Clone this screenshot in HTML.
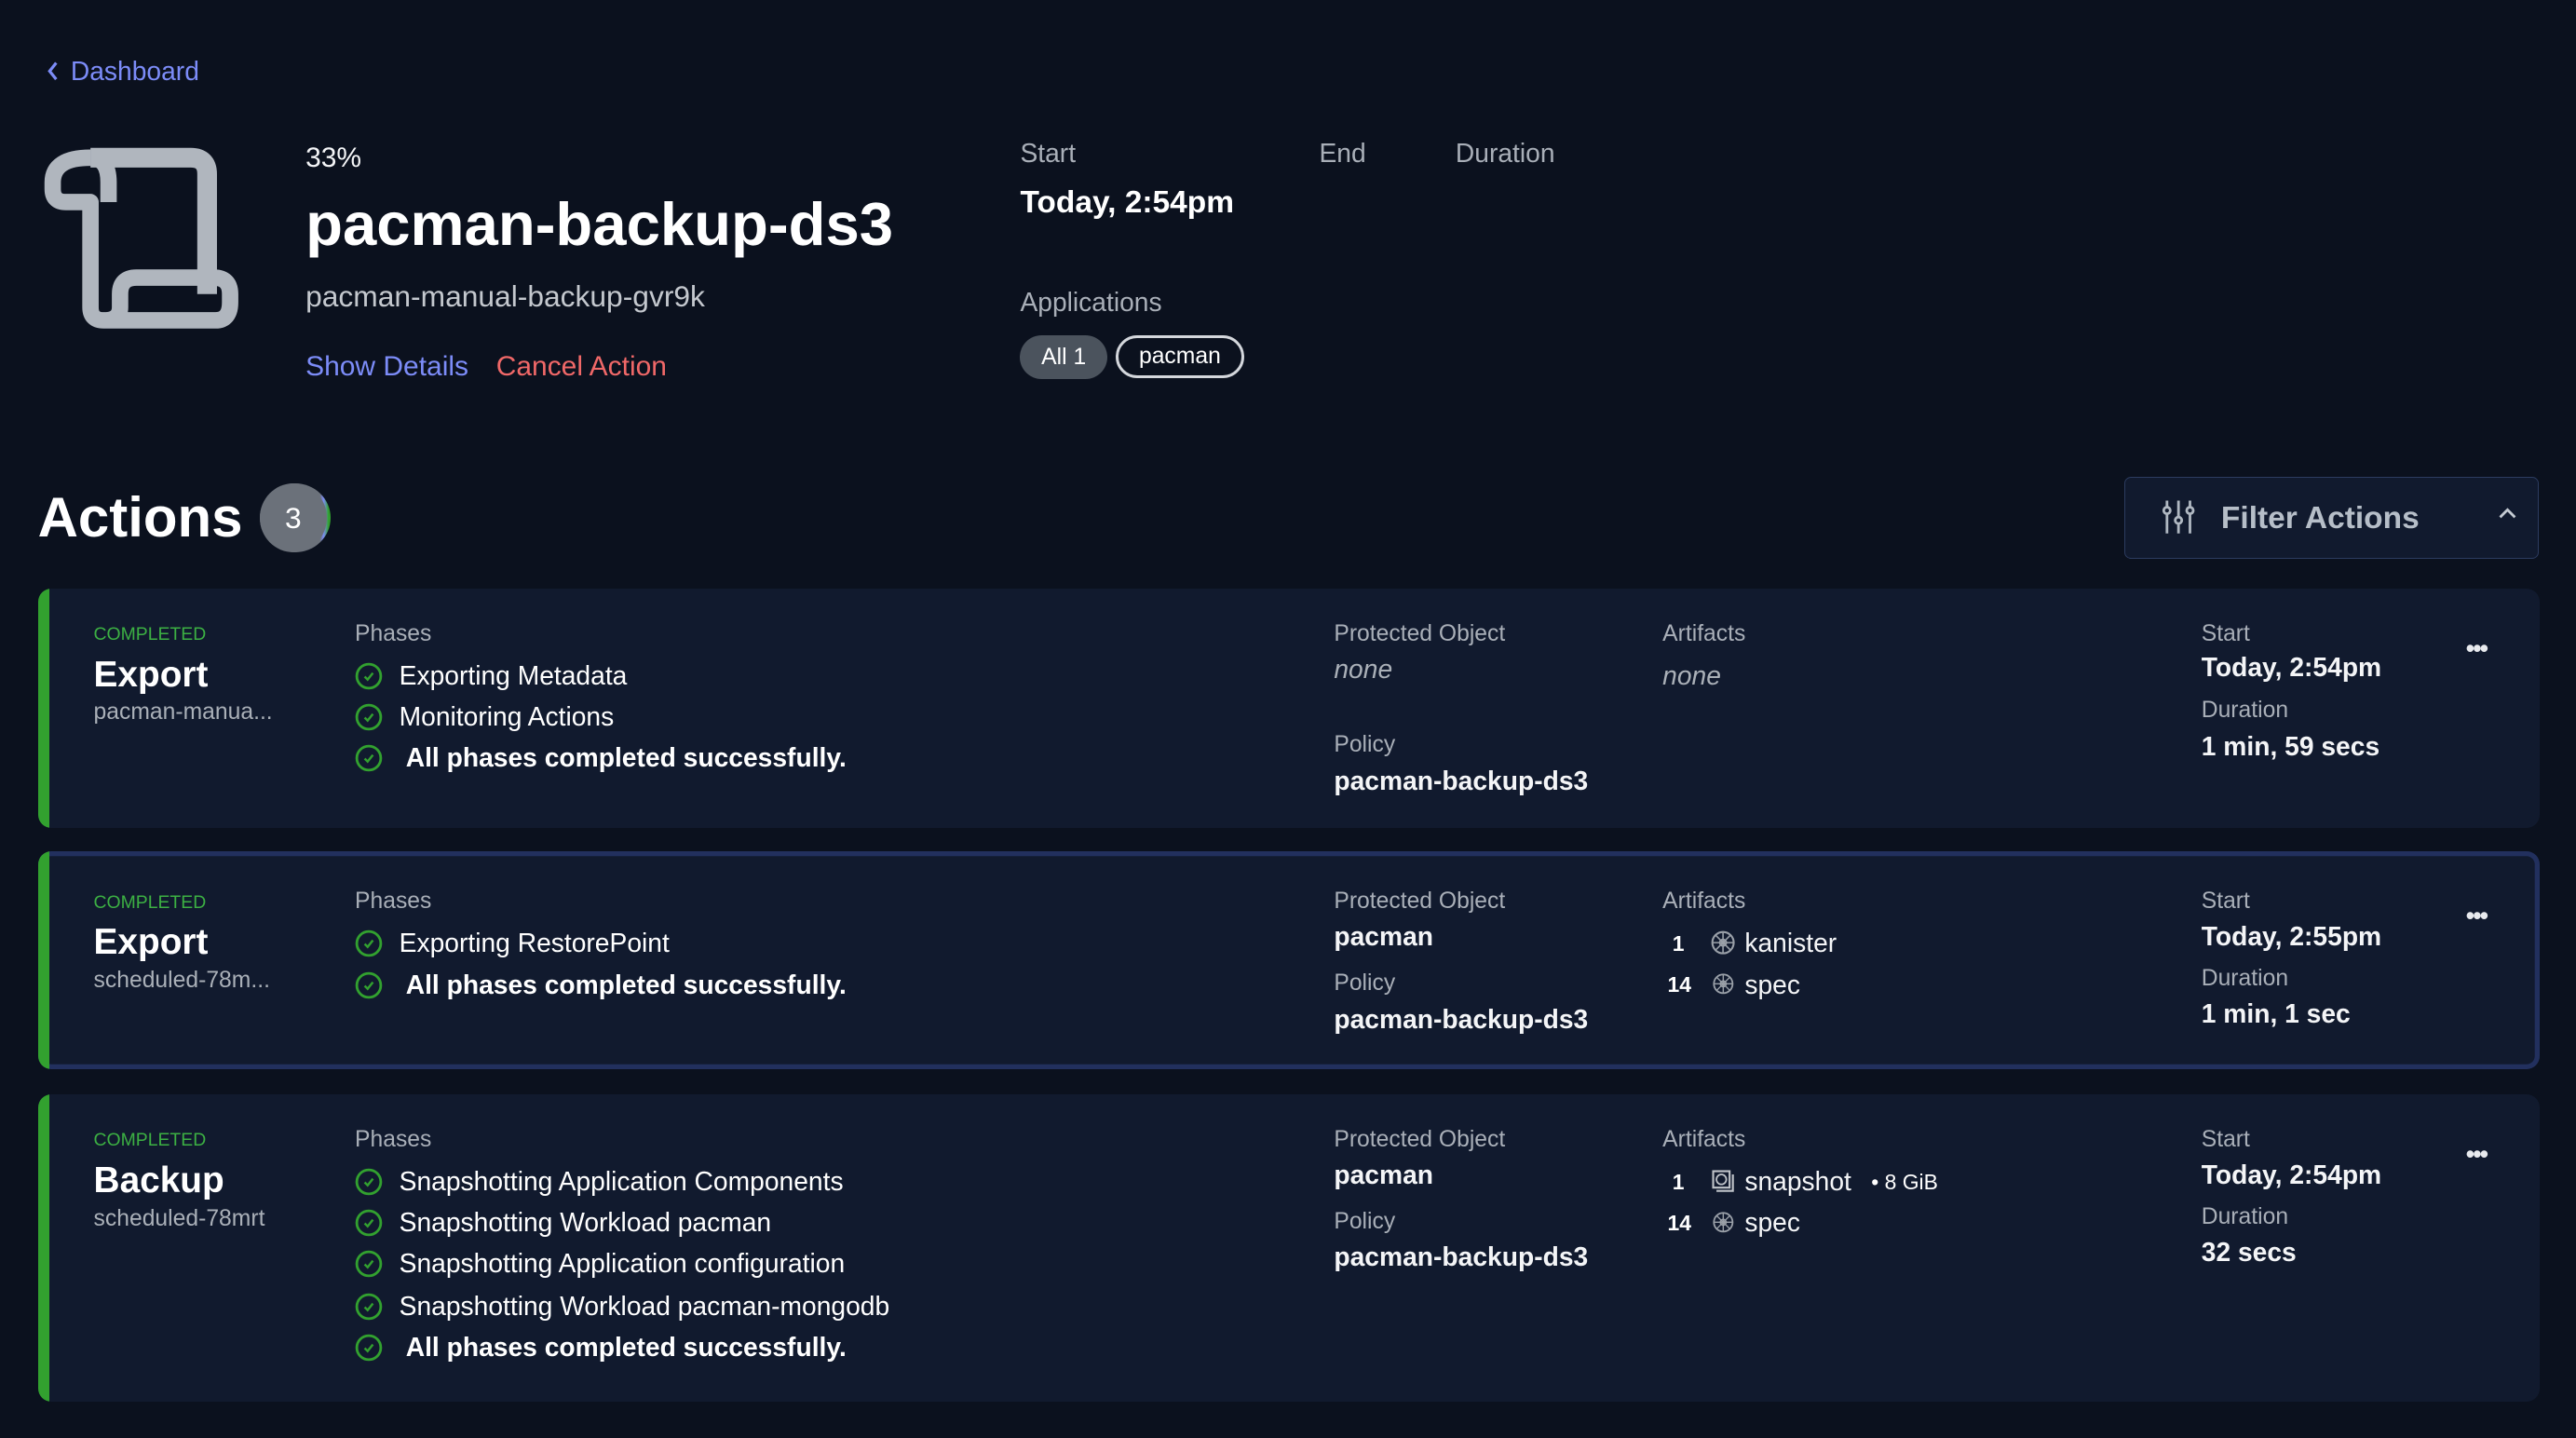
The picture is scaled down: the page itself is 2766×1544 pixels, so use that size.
<!DOCTYPE html>
<html><head><meta charset="utf-8"><style>
html,body{margin:0;padding:0;background:#0b111e;width:2766px;height:1544px;overflow:hidden}
#w{zoom:1.764;position:relative;width:1568px;height:875px;font-family:"Liberation Sans",sans-serif;color:#fff}
.t{position:absolute;white-space:nowrap;line-height:1}
div.t{margin-top:1px}
.lab{color:#a9afb8;font-size:14px}
.val{font-size:16px;font-weight:bold;color:#f4f5f7}
.card{position:absolute;left:23px;width:1523px;background:#111a2e;border-radius:8px;overflow:hidden}
.card .bar{position:absolute;left:0;top:0;bottom:0;width:7px;background:#32a12f}
.ck{position:absolute;width:17px;height:17px}
.dots{position:absolute;font-size:15px;font-weight:bold;letter-spacing:-1px;color:#e8eaee}
</style></head><body><div id="w">

<svg class="t" style="left:27px;top:36px" width="10" height="14" viewBox="0 0 10 14"><path d="M7 2 L3 7 L7 12" fill="none" stroke="#7c8cf8" stroke-width="1.8"/></svg>
<div class="t" style="left:43px;top:34px;font-size:16px;color:#7c8cf8">Dashboard</div>

<svg class="t" style="left:26px;top:89px" width="122" height="112" viewBox="0 0 122 112">
<path d="M29 7 H90 Q100 7 100 17 V90" fill="none" stroke="#b0b6be" stroke-width="12"/>
<path d="M29 7 Q6 7 6 22 V26 Q6 34 14 34 H29 V98 Q29 106 37 106 H105 Q114 106 114 95 V90 Q114 80 104 80 H57 Q47 80 47 90 V98 Q47 106 37 106" fill="none" stroke="#b0b6be" stroke-width="10" stroke-linejoin="round"/>
<path d="M29 7 Q40 7 40 22 V34" fill="none" stroke="#b0b6be" stroke-width="10"/>
</svg>

<div class="t" style="left:186px;top:87px;font-size:17px;color:#f4f5f7">33%</div>
<div class="t" style="left:186px;top:117px;font-size:37px;font-weight:bold;color:#fff">pacman-backup-ds3</div>
<div class="t" style="left:186px;top:171px;font-size:18px;color:#c4c8ce">pacman-manual-backup-gvr9k</div>
<div class="t" style="left:186px;top:214px;font-size:17px;color:#7c8cf8">Show Details</div>
<div class="t" style="left:302px;top:214px;font-size:17px;color:#f06868">Cancel Action</div>

<div class="t lab" style="left:621px;top:84px;font-size:16px">Start</div>
<div class="t lab" style="left:803px;top:84px;font-size:16px">End</div>
<div class="t lab" style="left:886px;top:84px;font-size:16px">Duration</div>
<div class="t" style="left:621px;top:113px;font-size:19px;font-weight:bold">Today, 2:54pm</div>
<div class="t lab" style="left:621px;top:175px;font-size:16px">Applications</div>
<div class="t" style="left:621px;top:203px;width:53px;height:27px;border-radius:14px;background:#4b535d;font-size:14px;line-height:27px;text-align:center">All 1</div>
<div class="t" style="left:679px;top:203px;width:75px;height:23px;border:2px solid #d4d7dc;border-radius:14px;font-size:14px;line-height:23px;text-align:center">pacman</div>

<div class="t" style="left:23px;top:297px;font-size:34px;font-weight:bold">Actions</div>
<div class="t" style="left:158px;top:293px;width:43px;height:42px;border-radius:50%;background:linear-gradient(90deg,#6b717a 85%,#7c8cf8 90%,#32a12f 97%)"></div>
<div class="t" style="left:158px;top:293px;width:41px;height:42px;border-radius:50%;background:#6b717a;font-size:18px;line-height:42px;text-align:center;color:#fff">3</div>

<div class="t" style="left:1293px;top:289px;width:251px;height:49px;border:1px solid #2c3c60;border-radius:4px;background:#111a2e"></div>
<svg class="t" style="left:1314px;top:303px" width="24" height="24" viewBox="0 0 24 24" fill="none" stroke="#b0b8c2" stroke-width="1.6"><path d="M5 2V6M5 10V22M12 2V12M12 16V22M19 2V6M19 10V22"/><circle cx="5" cy="8" r="2"/><circle cx="12" cy="14" r="2"/><circle cx="19" cy="8" r="2"/></svg>
<div class="t" style="left:1352px;top:305px;font-size:19px;font-weight:bold;color:#b6bec8">Filter Actions</div>
<svg class="t" style="left:1520px;top:308px" width="13" height="9" viewBox="0 0 13 9"><path d="M2 7 L6.5 2.5 L11 7" fill="none" stroke="#c4cad2" stroke-width="1.6"/></svg>

<div class="card" style="top:358px;height:146px"><div class="bar"></div></div>
<div class="card" style="top:518px;height:133px;box-shadow:inset 0 0 0 3px #22305e"><div class="bar"></div></div>
<div class="card" style="top:666px;height:187px"><div class="bar"></div></div>

<svg width="0" height="0" style="position:absolute"><defs><symbol id="c" viewBox="0 0 17 17"><circle cx="8.5" cy="8.5" r="7.3" fill="none" stroke="#32a12f" stroke-width="1.6"/><path d="M6 8.8 L7.8 10.6 L11 6.6" fill="none" stroke="#32a12f" stroke-width="1.4"/></symbol>
<symbol id="k" viewBox="0 0 16 16"><circle cx="8" cy="8" r="6.5" fill="none" stroke="#9aa0a8" stroke-width="1.2"/><circle cx="8" cy="8" r="2" fill="none" stroke="#9aa0a8"/><path d="M8 1.5V14.5M1.5 8H14.5M3.4 3.4L12.6 12.6M12.6 3.4L3.4 12.6" stroke="#9aa0a8" stroke-width="0.9"/></symbol>
<symbol id="s" viewBox="0 0 16 16"><rect x="2" y="2" width="10" height="10" fill="none" stroke="#c0c4ca" stroke-width="1.2"/><path d="M4 14H14V4" fill="none" stroke="#c0c4ca" stroke-width="1.2"/><circle cx="7" cy="7" r="3" fill="none" stroke="#c0c4ca"/></symbol></defs></svg>

<div class="t" style="left:57px;top:380px;font-size:11px;color:#3cb043">COMPLETED</div>
<div class="t" style="left:57px;top:399px;font-size:22px;font-weight:bold">Export</div>
<div class="t" style="left:57px;top:426px;font-size:14px;color:#aab0b8">pacman-manua...</div>
<div class="t lab" style="left:216px;top:378px">Phases</div>
<svg class="ck" style="left:216px;top:403px"><use href="#c"/></svg><div class="t" style="left:243px;top:402px;font-size:16px">Exporting Metadata</div>
<svg class="ck" style="left:216px;top:428px"><use href="#c"/></svg><div class="t" style="left:243px;top:427px;font-size:16px">Monitoring Actions</div>
<svg class="ck" style="left:216px;top:453px"><use href="#c"/></svg><div class="t" style="left:247px;top:452px;font-size:16px;font-weight:bold">All phases completed successfully.</div>
<div class="t lab" style="left:812px;top:378px">Protected Object</div>
<div class="t" style="left:812px;top:398px;font-size:16px;font-style:italic;color:#aab0b8">none</div>
<div class="t lab" style="left:812px;top:446px">Policy</div>
<div class="t val" style="left:812px;top:466px">pacman-backup-ds3</div>
<div class="t lab" style="left:1012px;top:378px">Artifacts</div>
<div class="t" style="left:1012px;top:402px;font-size:16px;font-style:italic;color:#aab0b8">none</div>
<div class="t lab" style="left:1340px;top:378px">Start</div>
<div class="t val" style="left:1340px;top:397px">Today, 2:54pm</div>
<div class="t lab" style="left:1340px;top:425px">Duration</div>
<div class="t val" style="left:1340px;top:445px">1 min, 59 secs</div>
<div class="t dots" style="left:1501px;top:386px">•••</div>

<div class="t" style="left:57px;top:543px;font-size:11px;color:#3cb043">COMPLETED</div>
<div class="t" style="left:57px;top:562px;font-size:22px;font-weight:bold">Export</div>
<div class="t" style="left:57px;top:589px;font-size:14px;color:#aab0b8">scheduled-78m...</div>
<div class="t lab" style="left:216px;top:541px">Phases</div>
<svg class="ck" style="left:216px;top:566px"><use href="#c"/></svg><div class="t" style="left:243px;top:565px;font-size:16px">Exporting RestorePoint</div>
<svg class="ck" style="left:216px;top:591px"><use href="#c"/></svg><div class="t" style="left:247px;top:590px;font-size:16px;font-weight:bold">All phases completed successfully.</div>
<div class="t lab" style="left:812px;top:541px">Protected Object</div>
<div class="t val" style="left:812px;top:561px">pacman</div>
<div class="t lab" style="left:812px;top:591px">Policy</div>
<div class="t val" style="left:812px;top:611px">pacman-backup-ds3</div>
<div class="t lab" style="left:1012px;top:541px">Artifacts</div>
<div class="t" style="left:1018px;top:567px;font-size:13px;font-weight:bold">1</div>
<svg class="t" style="left:1041px;top:566px" width="16" height="16"><use href="#k"/></svg>
<div class="t val" style="left:1062px;top:565px;font-weight:normal">kanister</div>
<div class="t" style="left:1015px;top:592px;font-size:13px;font-weight:bold">14</div>
<svg class="t" style="left:1042px;top:592px" width="14" height="14"><use href="#k"/></svg>
<div class="t val" style="left:1062px;top:590px;font-weight:normal">spec</div>
<div class="t lab" style="left:1340px;top:541px">Start</div>
<div class="t val" style="left:1340px;top:561px">Today, 2:55pm</div>
<div class="t lab" style="left:1340px;top:588px">Duration</div>
<div class="t val" style="left:1340px;top:608px">1 min, 1 sec</div>
<div class="t dots" style="left:1501px;top:549px">•••</div>

<div class="t" style="left:57px;top:688px;font-size:11px;color:#3cb043">COMPLETED</div>
<div class="t" style="left:57px;top:707px;font-size:22px;font-weight:bold">Backup</div>
<div class="t" style="left:57px;top:734px;font-size:14px;color:#aab0b8">scheduled-78mrt</div>
<div class="t lab" style="left:216px;top:686px">Phases</div>
<svg class="ck" style="left:216px;top:711px"><use href="#c"/></svg><div class="t" style="left:243px;top:710px;font-size:16px">Snapshotting Application Components</div>
<svg class="ck" style="left:216px;top:736px"><use href="#c"/></svg><div class="t" style="left:243px;top:735px;font-size:16px">Snapshotting Workload pacman</div>
<svg class="ck" style="left:216px;top:761px"><use href="#c"/></svg><div class="t" style="left:243px;top:760px;font-size:16px">Snapshotting Application configuration</div>
<svg class="ck" style="left:216px;top:787px"><use href="#c"/></svg><div class="t" style="left:243px;top:786px;font-size:16px">Snapshotting Workload pacman-mongodb</div>
<svg class="ck" style="left:216px;top:812px"><use href="#c"/></svg><div class="t" style="left:247px;top:811px;font-size:16px;font-weight:bold">All phases completed successfully.</div>
<div class="t lab" style="left:812px;top:686px">Protected Object</div>
<div class="t val" style="left:812px;top:706px">pacman</div>
<div class="t lab" style="left:812px;top:736px">Policy</div>
<div class="t val" style="left:812px;top:756px">pacman-backup-ds3</div>
<div class="t lab" style="left:1012px;top:686px">Artifacts</div>
<div class="t" style="left:1018px;top:712px;font-size:13px;font-weight:bold">1</div>
<svg class="t" style="left:1041px;top:711px" width="16" height="16"><use href="#s"/></svg>
<div class="t val" style="left:1062px;top:710px;font-weight:normal">snapshot</div>
<div class="t" style="left:1139px;top:712px;font-size:13px">• 8 GiB</div>
<div class="t" style="left:1015px;top:737px;font-size:13px;font-weight:bold">14</div>
<svg class="t" style="left:1042px;top:737px" width="14" height="14"><use href="#k"/></svg>
<div class="t val" style="left:1062px;top:735px;font-weight:normal">spec</div>
<div class="t lab" style="left:1340px;top:686px">Start</div>
<div class="t val" style="left:1340px;top:706px">Today, 2:54pm</div>
<div class="t lab" style="left:1340px;top:733px">Duration</div>
<div class="t val" style="left:1340px;top:753px">32 secs</div>
<div class="t dots" style="left:1501px;top:694px">•••</div>

</div></body></html>
